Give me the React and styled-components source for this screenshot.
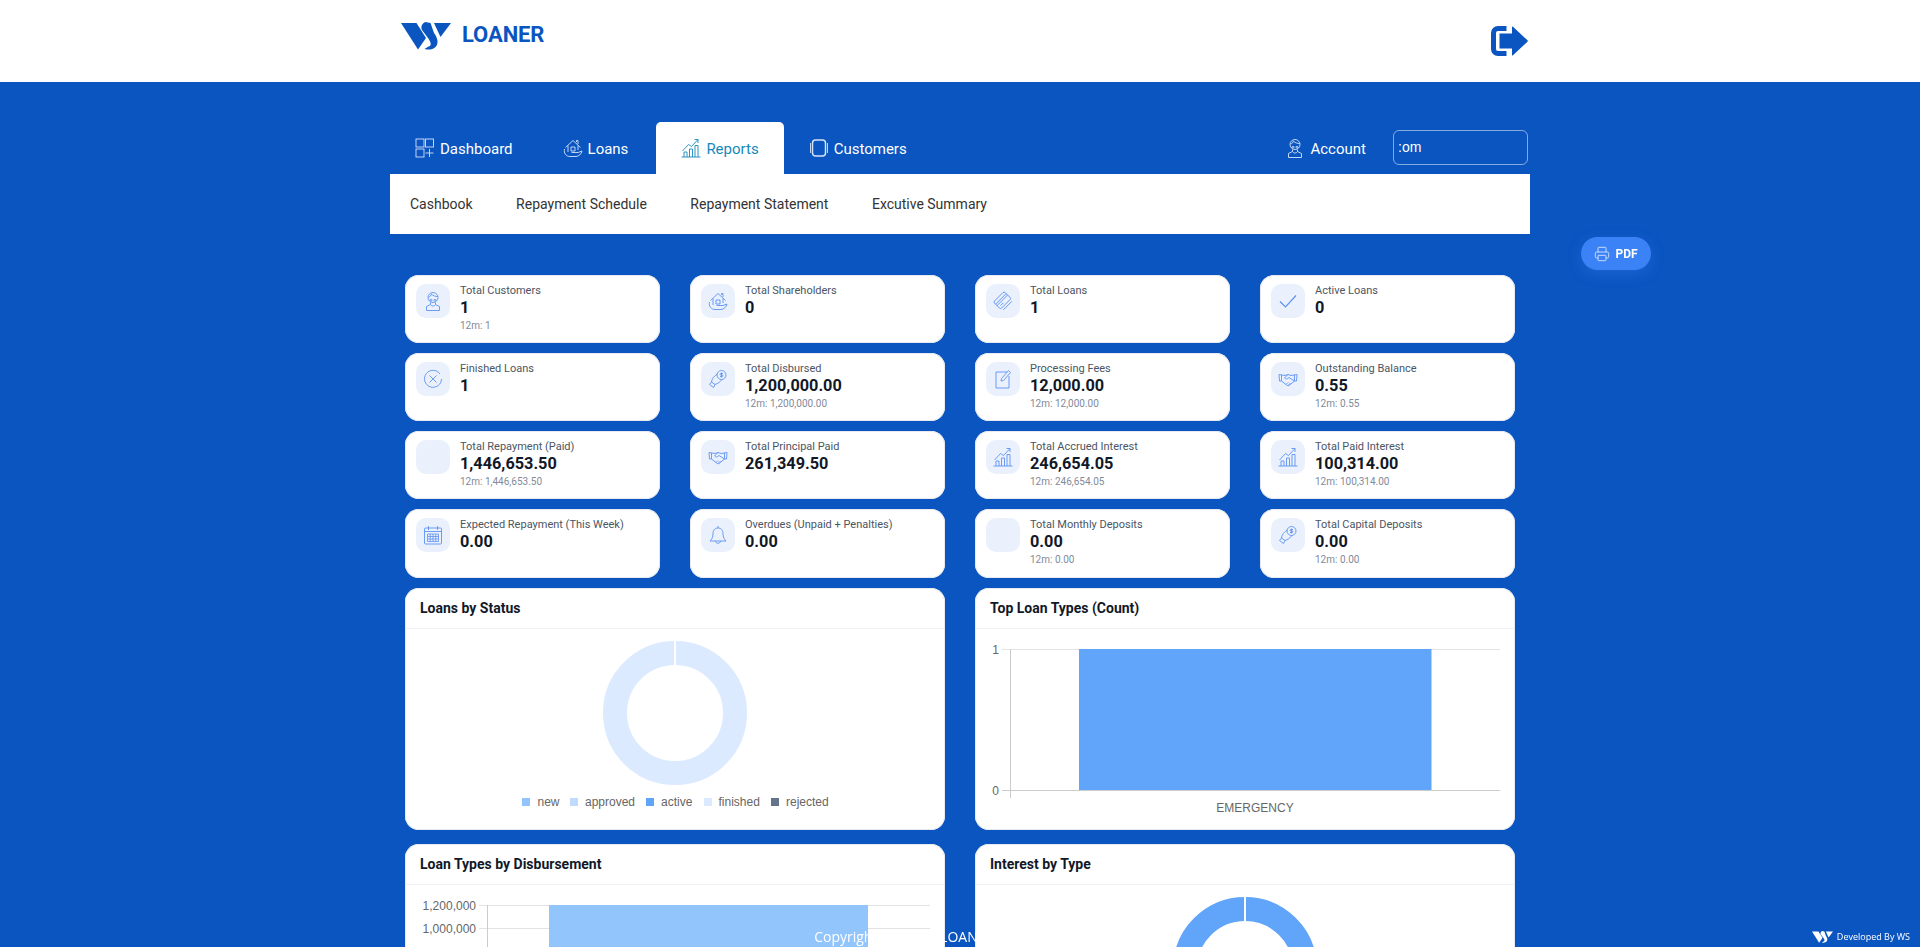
import React from 'react';
import styled, { createGlobalStyle } from 'styled-components';
import { Printer } from 'lucide-react';

const BLUE = '#0a55c0';

const GlobalStyle = createGlobalStyle`
  html, body {
    margin: 0;
    height: 100%;
    overflow: hidden;
    background: ${BLUE};
    font-family: Roboto, "Liberation Sans", sans-serif;
  }
  * { box-sizing: border-box; }
`;

const Header = styled.header`
  height: 82px;
  background: #fff;
`;

const Container = styled.div`
  width: 1140px;
  margin: 0 auto;
`;

const HeaderRow = styled(Container)`
  height: 82px;
  display: flex;
  align-items: flex-start;
  justify-content: space-between;
  padding: 22px 2px 0 11px;
`;

const Brand = styled.a`
  display: flex;
  align-items: flex-start;
  gap: 11px;
  color: ${BLUE};
  font-size: 22px;
  font-weight: 700;
  line-height: 26px;
  letter-spacing: -0.1px;
  svg { display: block; }
`;

const LogoutButton = styled.button`
  border: 0;
  background: none;
  padding: 4px 0 0;
  color: ${BLUE};
  svg { display: block; }
`;

const Main = styled.main`
  padding-top: 40px;
`;

const Nav = styled.nav`
  height: 52px;
  display: flex;
  justify-content: space-between;
`;

const TabList = styled.div`
  display: flex;
`;

const Tab = styled.a`
  display: flex;
  align-items: center;
  gap: 5px;
  padding: 2px 25px 0;
  margin-right: ${p => p.$gap || 0}px;
  color: ${p => (p.$active ? '#1589bb' : '#fff')};
  background: ${p => (p.$active ? '#fff' : 'transparent')};
  border-radius: 5px 5px 0 0;
  font-size: 15px;
  svg { display: block; margin-top: -2px; color: ${p => (p.$active ? '#1589bb' : '#d5e3fa')}; }
`;

const NavRight = styled.div`
  display: flex;
  align-items: center;
  padding: 0 2px 0 0;
`;

const AccountLink = styled.a`
  display: flex;
  align-items: center;
  gap: 5px;
  margin: 2px 27px 0 0;
  color: #fff;
  font-size: 15px;
  svg { display: block; margin-top: -2px; color: #d5e3fa; }
`;

const SearchInput = styled.input`
  width: 135px;
  height: 35px;
  margin-bottom: 1px;
  padding: 0 4px 1px;
  border: 1px solid rgba(255, 255, 255, 0.5);
  border-radius: 6px;
  background: transparent;
  color: #fff;
  font: 14px "Liberation Sans", sans-serif;
  outline: none;
`;

const SubNav = styled.div`
  height: 60px;
  display: flex;
  align-items: center;
  gap: 43.5px;
  padding: 0 20px 1px;
  background: #fff;
`;

const SubLink = styled.a`
  color: #333;
  font-size: 14px;
`;

const Content = styled.div`
  padding: 41px 15px 0;
`;

const StatGrid = styled.div`
  display: grid;
  grid-template-columns: repeat(4, 255px);
  grid-template-rows: 68px 68px 68px 69px;
  gap: 10px 30px;
`;

const StatCard = styled.div`
  display: flex;
  gap: 10px;
  padding: 9px 11px;
  background: #fff;
  border-radius: 14px;
  box-shadow: inset 0 0 0 1px #e7e9ee;
`;

const StatIcon = styled.div`
  flex: none;
  width: 34px;
  height: 34px;
  display: flex;
  align-items: center;
  justify-content: center;
  color: #5f92f2;
  background: #eaf1fd;
  border-radius: 10px;
  svg { display: block; }
`;

const StatBody = styled.div`
  min-width: 0;
  padding-top: 1px;
`;

const StatLabel = styled.div`
  color: #4b5563;
  font-size: 11px;
  line-height: 12px;
`;

const StatValue = styled.div`
  color: #111827;
  font-size: 16.3px;
  font-weight: 700;
  line-height: 21px;
`;

const StatSub = styled.div`
  margin-top: 2px;
  color: #7f8a9b;
  font-size: 10px;
  line-height: 12px;
`;

const ChartGrid = styled.div`
  display: grid;
  grid-template-columns: repeat(2, 540px);
  grid-auto-rows: 242px;
  gap: 14px 30px;
  margin-top: 10px;
`;

const ChartCard = styled.section`
  background: #fff;
  border-radius: 14px;
  box-shadow: inset 0 0 0 1px #e7e9ee;
  overflow: hidden;
`;

const ChartHead = styled.h3`
  height: 41px;
  margin: 0;
  padding: 0 15px;
  display: flex;
  align-items: center;
  border-bottom: 1px solid #eef0f3;
  color: #111827;
  font-size: 14px;
  font-weight: 700;
`;

const ChartSvg = styled.svg`
  display: block;
  width: 540px;
  height: 201px;
  font: 12px "Liberation Sans", Arial, sans-serif;
  text { fill: #666; }
`;

const PdfButton = styled.button`
  position: fixed;
  top: 237px;
  right: 269px;
  width: 70px;
  height: 33px;
  display: flex;
  align-items: center;
  justify-content: center;
  gap: 5px;
  border: 0;
  border-radius: 17px;
  background: #3b82f6;
  box-shadow: 0 4px 14px rgba(59, 130, 246, 0.35);
  color: #fff;
  font: 700 12px Roboto, sans-serif;
  svg { color: #c5dafc; }
`;

const Footer = styled.footer`
  position: fixed;
  left: 0;
  right: 0;
  bottom: 0;
  height: 20px;
  padding-left: 19px;
  color: #fff;
  text-align: center;
  font: 14px/20px "Open Sans", sans-serif;
`;

const Credit = styled.div`
  position: absolute;
  top: 0;
  right: 10px;
  display: flex;
  align-items: center;
  gap: 4px;
  font-size: 9px;
  svg { display: block; }
`;

const Logo = ({ width, height }) => (
  <svg width={width} height={height} viewBox="0 0 50 28" fill="currentColor">
    <path d="M0 1H15.5L25 16L17 27.5Z" />
    <path d="M24.5 0L29.5 1L33 11C36 15 38.5 21 34.5 25C31.5 28 27 28 23.5 27L27.5 24.5C31 24 30 20 27 16L21 8C19.5 5 21 1 24.5 0Z" />
    <path d="M33 1H50L39.5 15Z" />
  </svg>
);

const LogoutIcon = () => (
  <svg width="37" height="30" viewBox="0 0 37 30" fill="currentColor">
    <path d="M15.5 2.5H7A4.5 4.5 0 0 0 2.5 7V23A4.5 4.5 0 0 0 7 27.5H15.5" fill="none" stroke="currentColor" strokeWidth="5" />
    <path d="M8.5 7.5H21V1Q21 0 22 .8L36.5 14.3Q37 15 36.5 15.7L22 29.2Q21 30 21 29V22.5H8.5Z" />
  </svg>
);

// line icons, all drawn on a 20x20 grid
const paths = {
  dashboard: (
    <>
      <rect x="1" y="1" width="8" height="8" />
      <rect x="10.5" y="1" width="8" height="8" />
      <rect x="1" y="11" width="8" height="8" />
      <path d="M14.5 11V19M10.5 15H18.5" />
    </>
  ),
  house: (
    <>
      <path d="M2.5 9.5L10 2.5L17.5 9.5M5 7.500V14M15 7.500V12M13.500 4V2.500H15V6" />
      <path d="M8 13V9H12V13Z" />
      <path d="M1.500 11C.5 15 3 18.500 7 18.500H13C15.500 18.500 18.500 16 19 13L15 14.500H8.500" />
    </>
  ),
  chart: (
    <>
      <path d="M.5 19H19.500M3 19V14H6V19M8.500 19V11H11.500V19M14 19V7.500H17V19" />
      <path d="M1.500 13L7.500 6.500L10.500 8.500L17 1.500M13.500 1.500H17V5" />
    </>
  ),
  device: (
    <>
      <rect x="3.500" y="2" width="13" height="16" rx="3" strokeWidth="1.500" />
      <path d="M1.500 5V15M18.500 5V15" />
    </>
  ),
  person: (
    <>
      <circle cx="10" cy="6.500" r="5" />
      <path d="M5.500 6C7.500 5.500 8 4.500 8.500 3C10 5 12.500 5.500 15 5.500" />
      <path d="M7 8.500H9V10H7ZM11 8.500H13V10H11Z" strokeWidth=".7" />
      <path d="M7.500 11.500V13.500L3.500 15.500V19.500H16.500V15.500L12.500 13.500V11.500M7.500 13.500C8.500 15.500 11.500 15.500 12.500 13.500" />
    </>
  ),
  card: (
    <g transform="rotate(-45 10 10)">
      <rect x="2.500" y="4" width="15" height="10" rx="1.500" />
      <path d="M2.500 7H17.500M2.500 9H17.500M5 11.500H9M4 16.500H16" />
    </g>
  ),
  check: <path d="M2 10.500L7.500 16L18 4.500" strokeWidth="1.200" />,
  cross: (
    <>
      <path d="M17 5A8.500 8.500 0 1 0 18.500 10" />
      <path d="M6.500 6.500L13.500 13.500M13.500 6.500L6.500 13.500" />
    </>
  ),
  coin: (
    <>
      <circle cx="13.500" cy="6" r="4.500" />
      <path d="M13.500 3.500V8.500M15 4.500H12.800C11.800 4.500 11.800 6 12.800 6H14.200C15.200 6 15.200 7.500 14.200 7.500H12" />
      <path d="M9.500 5C6 7 4 9.500 3.500 13L7 15.500C10 14.500 12 13 14 10.500" />
      <path d="M3.500 13L1.500 15.500M7 15.500L5.500 18.500M1.500 15.500L5.500 18.500" />
    </>
  ),
  note: (
    <>
      <path d="M14 3H3V19H16V7" />
      <path d="M8 12L8.500 9.500L15.500 1.500L17.500 3.500L10.500 11.500Z" />
    </>
  ),
  handshake: (
    <>
      <path d="M1 5.500L7 6.500L10 5.500L13 6.500L19 5.500L18.500 12H16.500L11 16.500C10 17 9 16.500 8 15.500L3.500 12H1.500Z" />
      <path d="M10 5.500L6.500 9C7.500 10.500 9.500 10 11 8.500L16.500 12M8 15.500L10 13.500M10 16.500L12.500 14M3.500 6V12M16.500 6V12" />
    </>
  ),
  calendar: (
    <>
      <rect x="1.500" y="3" width="17" height="16" rx="1" />
      <path d="M5.500 1V5M14.500 1V5M1.500 6.500H18.500" />
      <path d="M4.500 9H15.500V16.500H4.500ZM4.500 11.500H15.500M4.500 14H15.500M7.200 9V16.500M10 9V16.500M12.800 9V16.500" strokeWidth=".8" />
    </>
  ),
  bell: (
    <>
      <path d="M10 3C6.500 3 5 5.500 5 9C5 12 4 14 2 16H18C16 14 15 12 15 9C15 5.500 13.500 3 10 3Z" />
      <path d="M10 3V1M7.500 16C7.500 19 12.500 19 12.500 16" />
    </>
  ),
};

const LineIcon = ({ name, size = 20 }) => (
  <svg width={size} height={size} viewBox="0 0 20 20" fill="none" stroke="currentColor" strokeWidth=".9">
    {paths[name]}
  </svg>
);

const stats = [
  { label: 'Total Customers', value: '1', sub: '12m: 1', icon: 'person' },
  { label: 'Total Shareholders', value: '0', icon: 'house' },
  { label: 'Total Loans', value: '1', icon: 'card' },
  { label: 'Active Loans', value: '0', icon: 'check' },
  { label: 'Finished Loans', value: '1', icon: 'cross' },
  { label: 'Total Disbursed', value: '1,200,000.00', sub: '12m: 1,200,000.00', icon: 'coin' },
  { label: 'Processing Fees', value: '12,000.00', sub: '12m: 12,000.00', icon: 'note' },
  { label: 'Outstanding Balance', value: '0.55', sub: '12m: 0.55', icon: 'handshake' },
  { label: 'Total Repayment (Paid)', value: '1,446,653.50', sub: '12m: 1,446,653.50' },
  { label: 'Total Principal Paid', value: '261,349.50', icon: 'handshake' },
  { label: 'Total Accrued Interest', value: '246,654.05', sub: '12m: 246,654.05', icon: 'chart' },
  { label: 'Total Paid Interest', value: '100,314.00', sub: '12m: 100,314.00', icon: 'chart' },
  { label: 'Expected Repayment (This Week)', value: '0.00', icon: 'calendar' },
  { label: 'Overdues (Unpaid + Penalties)', value: '0.00', icon: 'bell' },
  { label: 'Total Monthly Deposits', value: '0.00', sub: '12m: 0.00' },
  { label: 'Total Capital Deposits', value: '0.00', sub: '12m: 0.00', icon: 'coin' },
];

const legend = [
  { name: 'new', color: '#93c5fd', box: 117, text: 132.5 },
  { name: 'approved', color: '#bfdbfe', box: 165, text: 180 },
  { name: 'active', color: '#60a5fa', box: 241, text: 256 },
  { name: 'finished', color: '#dbeafe', box: 299, text: 313.5 },
  { name: 'rejected', color: '#64748b', box: 366, text: 381 },
];

const Donut = ({ color, showLegend }) => (
  <ChartSvg viewBox="0 0 540 201">
    <circle cx="270" cy="84" r="60" fill="none" stroke={color} strokeWidth="24" />
    <rect x="269" y="11" width="2" height="26" fill="#fff" />
    {showLegend && legend.map(l => (
      <g key={l.name}>
        <rect x={l.box} y="169" width="8" height="8" fill={l.color} />
        <text x={l.text} y="177">{l.name}</text>
      </g>
    ))}
  </ChartSvg>
);

const CountChart = () => (
  <ChartSvg viewBox="0 0 540 201">
    <path d="M27 20.500H525" stroke="#e3e3e3" />
    <path d="M35.500 20V169" stroke="#ccc" />
    <rect x="104" y="20" width="352.500" height="141" fill="#60a5fa" />
    <path d="M27 161.500H525" stroke="#ccc" />
    <text x="24" y="25" textAnchor="end">1</text>
    <text x="24" y="166" textAnchor="end">0</text>
    <text x="280" y="183" textAnchor="middle">EMERGENCY</text>
  </ChartSvg>
);

const ticks = ['1,200,000', '1,000,000', '800,000', '600,000', '400,000', '200,000', '0'];

const DisbursementChart = () => (
  <ChartSvg viewBox="0 0 540 201">
    {ticks.map((t, i) => (
      <g key={t}>
        <path d={`M74 ${20.5 + i * 23}H525`} stroke={i === 6 ? '#ccc' : '#e3e3e3'} />
        <text x="71" y={25 + i * 23} textAnchor="end">{t}</text>
      </g>
    ))}
    <path d="M82.500 20V166" stroke="#ccc" />
    <rect x="144" y="20" width="319" height="138" fill="#93c5fd" />
    <text x="303" y="180" textAnchor="middle">EMERGENCY</text>
  </ChartSvg>
);

export default function App() {
  return (
    <>
      <GlobalStyle />
      <Header>
        <HeaderRow>
          <Brand>
            <Logo width={50} height={28} />
            LOANER
          </Brand>
          <LogoutButton>
            <LogoutIcon />
          </LogoutButton>
        </HeaderRow>
      </Header>

      <Main>
        <Container>
          <Nav>
            <TabList>
              <Tab><LineIcon name="dashboard" />Dashboard</Tab>
              <Tab $gap={3}><LineIcon name="house" />Loans</Tab>
              <Tab $active><LineIcon name="chart" />Reports</Tab>
              <Tab><LineIcon name="device" />Customers</Tab>
            </TabList>
            <NavRight>
              <AccountLink><LineIcon name="person" />Account</AccountLink>
              <SearchInput readOnly value=":om" />
            </NavRight>
          </Nav>
          <SubNav>
            <SubLink>Cashbook</SubLink>
            <SubLink>Repayment Schedule</SubLink>
            <SubLink>Repayment Statement</SubLink>
            <SubLink>Excutive Summary</SubLink>
          </SubNav>

          <Content>
            <StatGrid>
              {stats.map(s => (
                <StatCard key={s.label}>
                  <StatIcon>{s.icon && <LineIcon name={s.icon} />}</StatIcon>
                  <StatBody>
                    <StatLabel>{s.label}</StatLabel>
                    <StatValue>{s.value}</StatValue>
                    {s.sub && <StatSub>{s.sub}</StatSub>}
                  </StatBody>
                </StatCard>
              ))}
            </StatGrid>

            <ChartGrid>
              <ChartCard>
                <ChartHead>Loans by Status</ChartHead>
                <Donut color="#dbeafe" showLegend />
              </ChartCard>
              <ChartCard>
                <ChartHead>Top Loan Types (Count)</ChartHead>
                <CountChart />
              </ChartCard>
              <ChartCard>
                <ChartHead>Loan Types by Disbursement</ChartHead>
                <DisbursementChart />
              </ChartCard>
              <ChartCard>
                <ChartHead>Interest by Type</ChartHead>
                <Donut color="#60a5fa" />
              </ChartCard>
            </ChartGrid>
          </Content>
        </Container>
      </Main>

      <PdfButton>
        <Printer size={16} strokeWidth={1.5} />
        PDF
      </PdfButton>

      <Footer>
        Copyright © 2025 - LOANER. All Rights Reserved
        <Credit>
          <Logo width={21} height={12} />
          Developed By WS
        </Credit>
      </Footer>
    </>
  );
}
